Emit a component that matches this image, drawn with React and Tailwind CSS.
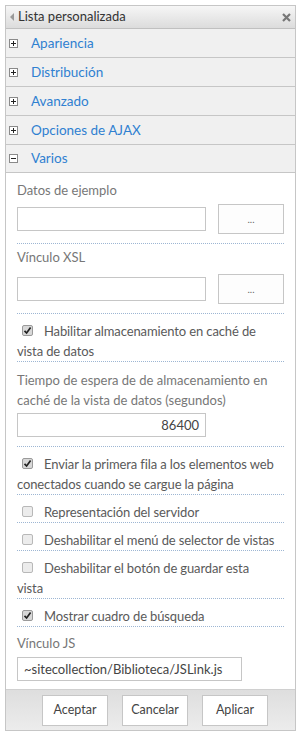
import React from 'react';

const font = { fontFamily: 'Lato, "Open Sans", Arial, sans-serif' };

const sections = ['Apariencia', 'Distribución', 'Avanzado', 'Opciones de AJAX'];

const Expander = ({ open }) => (
  <span className="flex h-[9px] w-[9px] items-center justify-center border border-[#8a8a8a] bg-white">
    <svg width="7" height="7" viewBox="0 0 7 7">
      <rect x="1" y="3" width="5" height="1" fill="#222" />
      {!open && <rect x="3" y="1" width="1" height="5" fill="#222" />}
    </svg>
  </span>
);

const Box = ({ checked }) => (
  <span
    className={`mt-[4px] flex h-[11px] w-[11px] shrink-0 items-center justify-center rounded-[2px] border ${
      checked ? 'border-[#9a9a9a] bg-[#d8d8d8]' : 'border-[#b8b8b8] bg-[#ececec]'
    }`}
  >
    {checked && (
      <svg width="9" height="9" viewBox="0 0 9 9">
        <path d="M1.5 4.8 L3.6 7 L7.6 1.6" stroke="#222" strokeWidth="1.7" fill="none" />
      </svg>
    )}
  </span>
);

const Sep = () => <div className="border-b border-dotted border-[#9db6d3]" />;

const Check = ({ checked, children }) => (
  <div className="pt-[7px] text-[13px] leading-[20px] tracking-[-0.12px] text-[#5a5a5a]">
    <span className="float-left mr-[11px] ml-[5px] flex h-[20px] items-start">
      <Box checked={checked} />
    </span>
    {children}
  </div>
);

const Label = ({ children }) => (
  <div className="text-[13px] leading-[20px] text-[#777]">{children}</div>
);

const Input = ({ value, className = '' }) => (
  <div
    className={`h-[24px] border border-[#c6c6c6] bg-white px-[6px] text-[13px] leading-[22px] text-[#444] ${className}`}
  >
    {value}
  </div>
);

const Browse = () => (
  <div className="flex h-[30px] w-[66px] items-center justify-center border border-[#c6c6c6] bg-[#fdfdfd] text-[10px] text-[#666]">
    ...
  </div>
);

const FooterButton = ({ children }) => (
  <button className="h-[31px] w-[66px] border border-[#c6c6c6] bg-white text-[12.5px] text-[#444]">
    {children}
  </button>
);

export default function App() {
  return (
    <div className="h-[736px] bg-white p-[5px]" style={font}>
      <div className="w-[291px] border border-[#c6c6c6]">
        <div className="flex h-[23px] items-center border-b border-[#c0c0c0] bg-gradient-to-b from-[#f6f6f6] to-[#dcdcdc]">
          <svg width="5" height="8" viewBox="0 0 5 8" className="ml-[4px] mr-[3px]">
            <path d="M4 0 L0 4 L4 8 Z" fill="#999" />
          </svg>
          <span className="text-[13px] text-[#333]">Lista personalizada</span>
          <svg width="9" height="9" viewBox="0 0 9 9" className="ml-auto mr-[4px]">
            <path d="M1 1 L8 8 M8 1 L1 8" stroke="#777" strokeWidth="2.2" />
          </svg>
        </div>

        {sections.map((s) => (
          <div
            key={s}
            className="flex h-[29px] items-center border-b border-[#c6c6c6] bg-[#f0f0f0] pl-[3px]"
          >
            <Expander />
            <span className="ml-[13px] text-[13.5px] text-[#2f80d1]">{s}</span>
          </div>
        ))}
        <div className="flex h-[28px] items-center border-b border-[#c6c6c6] bg-[#f0f0f0] pl-[3px]">
          <Expander open />
          <span className="ml-[13px] text-[13.5px] text-[#2f80d1]">Varios</span>
        </div>

        <div className="bg-white px-[11px] pt-[7px]">
          <Label>Datos de ejemplo</Label>
          <div className="mt-[4px] mb-[9px] flex items-center justify-between">
            <Input className="w-[189px]" />
            <Browse />
          </div>
          <Sep />

          <div className="pt-[3px]">
            <Label>Vínculo XSL</Label>
          </div>
          <div className="mt-[7px] mb-[9px] flex items-center justify-between">
            <Input className="w-[189px]" />
            <Browse />
          </div>
          <Sep />

          <Check checked>Habilitar almacenamiento en caché de vista de datos</Check>
          <Sep />

          <div className="pt-[8px]">
            <Label>
              Tiempo de espera de de almacenamiento en caché de la vista de datos (segundos)
            </Label>
          </div>
          <div className="mt-[3px] mb-[9px]">
            <Input value="86400" className="w-[189px] text-right" />
          </div>
          <Sep />

          <Check checked>Enviar la primera fila a los elementos web conectados cuando se cargue la página</Check>
          <Sep />
          <Check>Representación del servidor</Check>
          <Sep />
          <Check>Deshabilitar el menú de selector de vistas</Check>
          <Sep />
          <Check>
            Deshabilitar el botón de guardar esta
            <br />
            vista
          </Check>
          <Sep />
          <Check checked>Mostrar cuadro de búsqueda</Check>
          <Sep />

          <div className="pt-[6px]">
            <Label>Vínculo JS</Label>
          </div>
          <div className="mt-[4px] pb-[8px]">
            <Input value="~sitecollection/Biblioteca/JSLink.js" className="w-[225px]" />
          </div>
        </div>

        <div className="flex h-[41px] items-center justify-center gap-[14px] border-t border-[#d0d0d0] bg-gradient-to-b from-[#dedede] to-[#ececec] pl-[9px]">
          <FooterButton>Aceptar</FooterButton>
          <FooterButton>Cancelar</FooterButton>
          <FooterButton>Aplicar</FooterButton>
        </div>
      </div>
    </div>
  );
}
